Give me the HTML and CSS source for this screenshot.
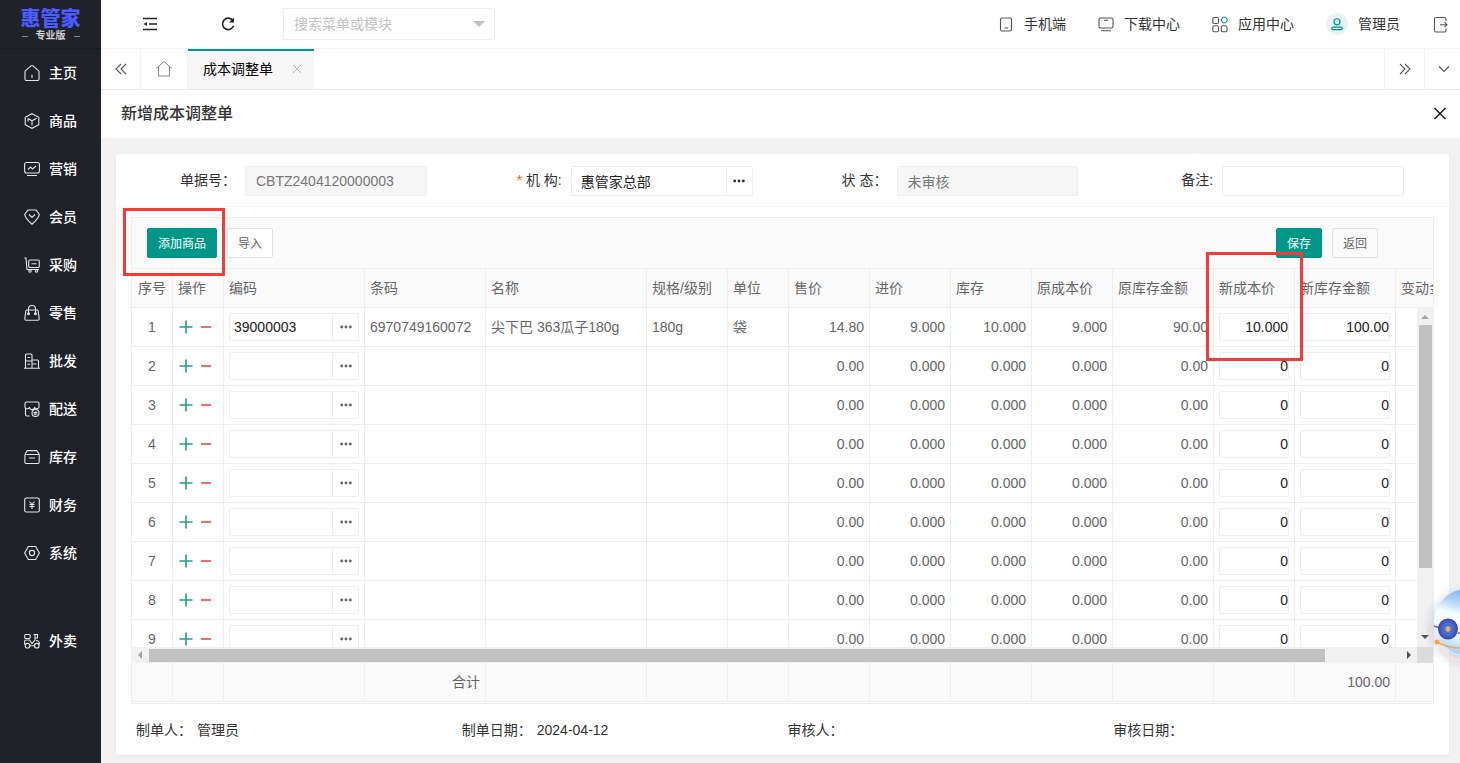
FILE: index.html
```html
<!DOCTYPE html>
<html lang="zh-CN">
<head>
<meta charset="utf-8">
<title>新增成本调整单</title>
<link rel="stylesheet" href="styles.css">
</head>
<body>
<div class="app">
  <aside class="sidebar">
    <div class="logo"><div class="logo-name">惠管家</div><div class="logo-sub"><i></i><span>专业版</span><i></i></div></div>
    <nav class="menu">
      <a class="menu-item" href="#"><svg class="icon" viewBox="0 0 16 16"><path d="M1 6.200 7 .9a1.500 1.500 0 0 1 2 0l6 5.300V14a1.500 1.500 0 0 1-1.500 1.500h-11A1.500 1.500 0 0 1 1 14zM8 9.500v3.500"/></svg>主页</a>
      <a class="menu-item" href="#"><svg class="icon" viewBox="0 0 16 16"><path d="M8 .7 14.800 4.300v7.400L8 15.300 1.200 11.700V4.300zM4 5.500l4 2.300 4.500-2.600M8 7.800V12.500M4 5.500v3"/></svg>商品</a>
      <a class="menu-item" href="#"><svg class="icon" viewBox="0 0 16 16"><rect x=".6" y="1.500" width="14.800" height="10.500" rx="2"/><path d="m4 8.500 2.500-2.500 2 2L12 5M3 14.500h10"/></svg>营销</a>
      <a class="menu-item" href="#"><svg class="icon" viewBox="0 0 16 16"><path d="M4 1h8l3.300 4.500c0 3-4.300 7-7.300 9.800C5 12.500.7 8.500.7 5.500zM5 5.500l3 3 3-3"/></svg>会员</a>
      <a class="menu-item" href="#"><svg class="icon" viewBox="0 0 16 16"><path d="M.3 1h1.700l1 11.500H15M6 3h8a1.300 1.300 0 0 1 1.300 1.300v4.900A1.300 1.300 0 0 1 14 10.500H6A1.300 1.300 0 0 1 4.700 9.200V4.300A1.300 1.300 0 0 1 6 3zM7.500 6.700h5"/><circle cx="6" cy="14" r="1.200"/><circle cx="12.500" cy="14" r="1.200"/></svg>采购</a>
      <a class="menu-item" href="#"><svg class="icon" viewBox="0 0 16 16"><path d="M3 5h10a1.200 1.200 0 0 1 1.200 1L15.200 14a1.200 1.200 0 0 1-1.200 1.200H2A1.200 1.200 0 0 1 .8 14L1.800 6A1.200 1.200 0 0 1 3 5zM4.500 8.500V4a3.500 3.500 0 0 1 7 0v4.500"/><circle cx="4.500" cy="8.700" r="1"/><circle cx="11.500" cy="8.700" r="1"/></svg>零售</a>
      <a class="menu-item" href="#"><svg class="icon" viewBox="0 0 16 16"><path d="M1.500 15V2a1 1 0 0 1 1-1H7a1 1 0 0 1 1 1v13M8 7h5.500a1 1 0 0 1 1 1v7M0 15.300h16M3.500 4.500h2.500M1.500 8H8M3.500 11.300H6M8 11h4.500"/></svg>批发</a>
      <a class="menu-item" href="#"><svg class="icon" viewBox="0 0 16 16"><path d="M1.500 7.500V13.500a1.500 1.500 0 0 0 1.500 1.500h2.500M2.500 1h11A1.500 1.500 0 0 1 15 2.500V5a2 2 0 0 1-4.300 1 2.500 2.500 0 0 1-5.200 0A2.300 2.300 0 0 1 1 5V2.500A1.500 1.500 0 0 1 2.500 1z"/><circle cx="11.500" cy="12" r="3.500"/><path d="M9.500 11.500h3l-1-1M13.500 13h-3l1 1"/></svg>配送</a>
      <a class="menu-item" href="#"><svg class="icon" viewBox="0 0 16 16"><path d="M1 5.500 2.500 2.500a1.500 1.500 0 0 1 1-.9h9a1.500 1.500 0 0 1 1 .9L15.200 5.500V13a1.500 1.500 0 0 1-1.500 1.500H2.500A1.500 1.500 0 0 1 .8 13zM1 5.500h14M5 9h6"/></svg>库存</a>
      <a class="menu-item" href="#"><svg class="icon" viewBox="0 0 16 16"><rect x=".7" y="1" width="14.600" height="14" rx="1.500"/><path d="m5.500 4.500 2.500 3 2.500-3M5.500 7.500h5M5.500 9.500h5M8 7.500V12"/></svg>财务</a>
      <a class="menu-item" href="#"><svg class="icon" viewBox="0 0 16 16"><path d="M4.300 1.500h7.400L15.400 8l-3.700 6.500H4.300L.6 8z"/><circle cx="8" cy="8" r="2.600"/></svg>系统</a>
      <a class="menu-item menu-item-apart" href="#"><svg class="icon" viewBox="0 0 16 16"><rect x=".7" y="1.500" width="5.500" height="4" rx="1"/><path d="M.6 11.500V8.500a1.500 1.500 0 0 1 1.500-1.500H5.500l2.500 3.500 3-3.500V1.500H9.500M11 1.500h2.500v3.500H11M12 7.500c2 0 3.500 1.500 3.500 4M6 12.700h4.500"/><circle cx="3.500" cy="12.700" r="2.300"/><circle cx="12.800" cy="12.700" r="2.300"/></svg>外卖</a>
    </nav>
  </aside>

  <div class="main">
    <header class="topbar">
      <button class="icon-btn top-fold" aria-label="收起菜单"><svg class="icon dark" viewBox="0 0 16 16"><path d="M1 2.500h14M7 8h8M1 13.500h14"/><path class="solid" d="M1.500 8 5 6v4z"/></svg></button>
      <button class="icon-btn" aria-label="刷新"><svg class="icon dark" viewBox="0 0 16 16"><path class="thick" d="M12.600 4.200A5.700 5.700 0 1 0 13.600 9.800"/><path class="solid" d="M14 1.500v5H9z"/></svg></button>
      <div class="search"><select aria-label="搜索菜单或模块"><option>搜索菜单或模块</option></select><span class="caret"></span></div>
      <nav class="top-links">
        <a href="#"><svg class="icon" viewBox="0 0 16 16"><rect x="2.500" y="2" width="11" height="13" rx="1.500"/><path d="M6.500 12h3.500"/></svg>手机端</a>
        <a href="#"><svg class="icon" viewBox="0 0 16 16"><rect x="1" y="2" width="14" height="10" rx="1.500"/><path d="M6 4.300h4M3 14.800h10"/></svg>下载中心</a>
        <a href="#"><svg class="icon" viewBox="0 0 16 16"><rect x=".8" y="1.500" width="5.700" height="6" rx="1.500"/><rect x=".8" y="9.800" width="5.700" height="6" rx="1.500"/><rect x="9.300" y="9.800" width="5.700" height="6" rx="1.500"/><path class="teal" d="M10.800 1.300h3L15.400 4l-1.600 2.800h-3L9.200 4z"/></svg>应用中心</a>
        <a href="#"><span class="avatar"><svg class="icon" viewBox="0 0 16 16"><circle class="teal" cx="8" cy="5.500" r="3.500"/><rect class="teal" x="2" y="11.500" width="12" height="3" rx="1.500"/></svg></span>管理员</a>
        <a href="#" aria-label="退出"><svg class="icon" viewBox="0 0 16 16"><path d="M14 5V3a1.500 1.500 0 0 0-1.500-1.500H4A1.500 1.500 0 0 0 2.500 3v11.500A1.500 1.500 0 0 0 4 16h8.500a1.500 1.500 0 0 0 1.500-1.500v-2M8 8.700h7M12.500 6.200l2.500 2.500-2.500 2.500"/></svg></a>
      </nav>
    </header>

    <div class="tabs">
      <button class="tab-cell" aria-label="向左"><svg class="icon" viewBox="0 0 16 16"><path d="M8 3 3 8l5 5M13 3 8 8l5 5"/></svg></button>
      <button class="tab-cell tab-home" aria-label="首页"><svg class="icon home" viewBox="0 0 18 18"><path d="M1 8.500 9 1.500l8 7M3.500 7v9h11V7"/></svg></button>
      <div class="tab-active"><span>成本调整单</span><button class="tab-close" aria-label="关闭标签"><svg viewBox="0 0 10 10"><path d="m1 1 8 8M9 1 1 9"/></svg></button></div>
      <button class="tab-cell tab-next" aria-label="向右"><svg class="icon" viewBox="0 0 16 16"><path d="m3 3 5 5-5 5M8 3l5 5-5 5"/></svg></button>
      <button class="tab-cell tab-more" aria-label="更多"><svg class="icon" viewBox="0 0 16 16"><path d="m3 5.500 5 5 5-5"/></svg></button>
    </div>

    <div class="titlebar"><h1>新增成本调整单</h1><button class="icon-btn" aria-label="关闭"><svg class="icon dark" viewBox="0 0 16 16"><path class="thick" d="m2.500 2 11 11M13.500 2l-11 11"/></svg></button></div>

    <div class="content">
      <section class="card">
        <form class="fields">
          <div class="field"><label for="no">单据号：</label><input id="no" class="disabled" value="CBTZ2404120000003" readonly></div>
          <div class="field"><label for="org"><em>*</em> 机 构:</label><div class="picker"><input id="org" value="惠管家总部"><button type="button" aria-label="选择机构"><svg class="dots" viewBox="0 0 14 4"><circle cx="2" cy="2" r="1.700"/><circle cx="7" cy="2" r="1.700"/><circle cx="12" cy="2" r="1.700"/></svg></button></div></div>
          <div class="field"><label for="state">状 态：</label><input id="state" class="disabled" value="未审核" readonly></div>
          <div class="field"><label for="memo">备注:</label><input id="memo"></div>
        </form>

        <div class="grid">
          <div class="toolbar">
            <button class="btn primary">添加商品</button>
            <button class="btn">导入</button>
            <button class="btn primary btn-save">保存</button>
            <button class="btn ghost">返回</button>
          </div>
          <div class="clip grid-head">
            <table>
              <colgroup class="cols"></colgroup>
              <thead><tr><th class="center">序号</th><th>操作</th><th>编码</th><th>条码</th><th>名称</th><th>规格/级别</th><th>单位</th><th>售价</th><th>进价</th><th>库存</th><th>原成本价</th><th>原库存金额</th><th>新成本价</th><th>新库存金额</th><th>变动金额</th></tr></thead>
            </table>
          </div>
          <div class="grid-body">
            <div class="clip"><table><colgroup class="cols"></colgroup><tbody id="rows"></tbody></table></div>
            <div class="bar bar-v"><span class="arrow up"></span><span class="thumb"></span><span class="arrow down"></span></div>
            <div class="bar bar-h"><span class="arrow left"></span><span class="track"><span class="thumb"></span></span><span class="arrow right"></span></div>
            <div class="corner"></div>
          </div>
          <div class="clip grid-foot">
            <table>
              <colgroup class="cols"></colgroup>
              <tbody><tr><td></td><td></td><td></td><td class="num">合计</td><td></td><td></td><td></td><td></td><td></td><td></td><td></td><td></td><td></td><td class="num">100.00</td><td></td></tr></tbody>
            </table>
          </div>
          <div class="mark mark-add"></div>
          <div class="mark mark-cost"></div>
        </div>

        <footer class="meta">
          <div><span>制单人：</span><span>管理员</span></div>
          <div><span>制单日期：</span><span>2024-04-12</span></div>
          <div><span>审核人：</span></div>
          <div><span>审核日期：</span></div>
        </footer>
      </section>
    </div>
  </div>

  <svg class="robot" viewBox="0 0 38 90">
    <defs>
      <linearGradient id="shell" x1=".6" y1="0" x2=".35" y2="1"><stop offset="0" stop-color="#6fa8ee"/><stop offset=".25" stop-color="#b5d6f8"/><stop offset=".42" stop-color="#f6fcff"/><stop offset=".7" stop-color="#f4fbff"/><stop offset="1" stop-color="#9ecbf5"/></linearGradient>
      <radialGradient id="eye"><stop offset="0" stop-color="#5b7fdc"/><stop offset=".6" stop-color="#4a66cc"/><stop offset="1" stop-color="#3345ad"/></radialGradient>
      <radialGradient id="halo"><stop offset=".75" stop-color="#8c9cd0" stop-opacity=".22"/><stop offset="1" stop-color="#8c9cd0" stop-opacity="0"/></radialGradient>
    </defs>
    <circle cx="43" cy="47" r="43" fill="url(#halo)"/>
    <path d="M18 64c-3 8 8 15 20 16" fill="none" stroke="#fbe3cf" stroke-width="2"/>
    <circle cx="45" cy="42" r="33" fill="url(#shell)"/>
    <path d="M12 46l6 2M36 53h2" fill="none" stroke="#5468b8" stroke-width="1.500"/>
    <ellipse cx="26" cy="49" rx="10" ry="10.500" fill="url(#eye)"/>
    <ellipse cx="26" cy="49" rx="2.400" ry="2.800" fill="#f8ab55"/>
    <path d="M10 44c-6 5-4 13 5 18" fill="none" stroke="#fcd3ac" stroke-width="1"/>
    <path d="M15 62c7 4 15 6 23 6" fill="none" stroke="#fba64c" stroke-width="1.500"/>
    <circle cx="15" cy="62" r="2.500" fill="#fba23c"/>
  </svg>
</div>
<script src="script.js"></script>
</body>
</html>
```
FILE: styles.css
```css
* { box-sizing: border-box; }
body { margin: 0; font: 14px/20px "Liberation Sans", "Noto Sans CJK SC", sans-serif; color: #333; }
button, input, select { font: inherit; color: inherit; margin: 0; padding: 0; }
button { background: none; border: 0; cursor: pointer; }
a { color: inherit; text-decoration: none; }
.app { display: flex; height: 100vh; min-height: 560px; overflow: hidden; position: relative; }

.icon { display: block; flex: none; width: 16px; height: 16px; fill: none; stroke: #555; stroke-width: 1.1; overflow: visible; }
.icon.dark { stroke: #222; stroke-width: 1.4; }
.icon .solid { fill: #222; stroke: none; }
.icon .thick { stroke-width: 1.6; }
.icon .teal { stroke: #009688; }
.icon-btn { width: 16px; height: 16px; flex: none; }

.sidebar { width: 101px; flex: none; background: #20222a; color: #fff; }
.logo { height: 49px; padding-top: 9px; border-bottom: 1px solid #1b1d24; text-align: center; }
.logo-name { color: #4a5cff; font-size: 20px; font-weight: 900; line-height: 20px; }
.logo-sub { display: flex; justify-content: center; align-items: center; gap: 8px; margin-top: 1px; font-size: 10px; line-height: 12px; font-weight: 700; color: #d0d0d2; }
.logo-sub i { width: 6px; height: 1px; background: #888; }
.menu-item { display: flex; align-items: center; gap: 9px; height: 48px; padding-left: 24px; font-weight: 500; }
.menu-item .icon { stroke: #e6e6e6; }
.menu-item-apart { margin-top: 40px; }

.main { flex: 1; min-width: 0; display: flex; flex-direction: column; background: #f1f1f1; }
.topbar { display: flex; align-items: center; height: 49px; flex: none; background: #fff; border-bottom: 1px solid #f4f4f4; padding: 0 12px 0 41px; }
.top-fold { margin-right: 62px; }
.search { position: relative; width: 212px; height: 32px; margin-left: 47px; }
.search select { width: 100%; height: 100%; appearance: none; border: 1px solid #eee; background: #fff; color: #c2c2c2; padding-left: 10px; }
.caret { position: absolute; right: 10px; top: 13px; border: 6px solid transparent; border-top-color: #c2c2c2; border-bottom: 0; }
.top-links { display: flex; align-items: center; gap: 32px; margin-left: auto; }
.top-links a { display: flex; align-items: center; gap: 10px; }
.avatar { width: 22px; height: 22px; border-radius: 50%; background: #e6f5f3; display: grid; place-items: center; }
.avatar .icon { width: 14px; height: 14px; stroke-width: 1.4; }

.tabs { display: flex; height: 41px; flex: none; background: #fff; border-bottom: 1px solid #e8e8e8; }
.tab-cell { width: 40px; flex: none; display: grid; place-items: center; border-right: 1px solid #f4f4f4; }
.tab-home { width: 47px; }
.tab-cell .home { width: 18px; height: 18px; stroke: #888; stroke-width: 1; }
.tab-active { display: flex; align-items: center; width: 126px; padding: 0 12px 2px 15px; justify-content: space-between; background: #f6f6f6; border-top: 2px solid #009688; color: #000; }
.tab-close { width: 10px; height: 10px; }
.tab-close svg { display: block; stroke: #bbb; fill: none; }
.tab-next { margin-left: auto; width: 41px; border-left: 1px solid #f4f4f4; }
.tab-more { width: 35px; padding-left: 3px; border: 0; }

.titlebar { display: flex; align-items: center; justify-content: space-between; height: 48px; flex: none; background: #fff; padding: 0 12px 0 20px; }
.titlebar h1 { margin: 0; font-size: 16px; font-weight: 500; line-height: 24px; }

.content { flex: 1; min-height: 0; padding: 16px 11px 8px 15px; }
.card { height: 100%; display: flex; flex-direction: column; background: #fff; border-radius: 2px; box-shadow: 0 1px 2px rgba(0, 0, 0, .06); }
.fields { display: grid; grid-template-columns: repeat(4, minmax(0, 1fr)); height: 53px; flex: none; padding: 12px 15px 0; border-bottom: 1px solid #f6f6f6; }
.field { display: flex; align-items: flex-start; padding-right: 30px; }
.field label { width: 105px; margin-right: 9px; flex: none; text-align: right; line-height: 28px; white-space: nowrap; }
.field em { color: #ff5722; font-style: normal; }
.field input, .picker { flex: 1; min-width: 0; height: 30px; border: 1px solid #eee; border-radius: 2px; background: #fff; padding: 0 10px; color: #222; }
.field .disabled { background: #f6f6f6; color: #777; }
.picker { display: flex; padding: 0; }
.field .picker input { height: 28px; border: 0; padding: 0 9px; }
.picker button { width: 26px; flex: none; border-left: 1px solid #eee; display: grid; place-items: center; }
.dots { display: block; width: 12px; height: 4px; fill: #333; }

.grid { position: relative; flex: 1; min-height: 0; margin: 10px 15px 0; border: 1px solid #eee; display: flex; flex-direction: column; padding-bottom: 1px; }
.toolbar { display: flex; align-items: center; gap: 10px; height: 51px; flex: none; padding: 0 55px 0 15px; background: #fafafa; border-bottom: 1px solid #eee; }
.btn { height: 30px; padding: 1px 10px 0; border: 1px solid #e2e2e2; border-radius: 2px; background: #fff; color: #666; font-size: 12px; line-height: 28px; white-space: nowrap; min-width: 46px; }
.primary { background: #009688; border-color: #009688; color: #fff; }
.ghost { background: #fafafa; }
.btn-save { margin-left: auto; }
.clip { overflow: hidden; min-width: 0; min-height: 0; }
table { border-collapse: separate; border-spacing: 0; table-layout: fixed; width: 1365px; color: #666; }
th, td { height: 39px; padding: 0 5px; border-right: 1px solid #eee; border-bottom: 1px solid #eee; text-align: left; font-weight: 400; white-space: nowrap; }
.center { text-align: center; }
.num { text-align: right; }
.grid-head, .grid-foot { flex: none; background: #fafafa; }
.w40 { width: 41px; } .w50 { width: 51px; } .w60 { width: 61px; } .w80 { width: 81px; }
.w100 { width: 101px; } .w120 { width: 121px; } .w140 { width: 141px; } .w160 { width: 161px; }

td .cell-input { display: block; width: 100%; height: 28px; border: 1px solid #eee; border-radius: 2px; padding: 0; text-align: right; color: #222; background: #fff; }
td .picker { height: 28px; border: 1px solid #eee; border-radius: 2px; }
td .picker input { flex: 1; min-width: 0; border: 0; padding: 0 4px; color: #222; background: none; }
td .dots { fill: #666; }
.ops { display: flex; align-items: center; gap: 6px; padding-left: 1px; }
.ops button { width: 14px; height: 14px; }
.ops svg { display: block; width: 14px; height: 14px; fill: none; stroke-width: 1.6; }
.ops .add { stroke: #279c8b; }
.ops .del { stroke: #f56c6c; stroke-width: 2; }

.grid-body { flex: 1; min-height: 0; display: grid; grid-template-columns: minmax(0, 1fr) 16px; grid-template-rows: minmax(0, 1fr) 16px; }
.bar { display: flex; align-items: center; justify-content: space-between; background: #f1f1f1; }
.bar-v { flex-direction: column; padding: 7px 0 8px; }
.bar-v .thumb { width: 13px; flex: 0 0 75%; margin: 6px 0 auto; }
.bar-h { padding: 0 6px; gap: 7px; }
.track { flex: 1; display: flex; }
.thumb { background: #c1c1c1; }
.track .thumb { width: 94%; height: 13px; }
.corner { background: #dcdcdc; }
.arrow { border: 4px solid transparent; flex: none; }
.up { border-top: 0; border-bottom-color: #a3a3a3; }
.down { border-bottom: 0; border-top-color: #505050; }
.left { border-left: 0; border-right-color: #a3a3a3; }
.right { border-right: 0; border-left-color: #505050; }

.mark { position: absolute; border: 3px solid #fb3838; pointer-events: none; }
.mark-add { left: -9px; top: -10px; width: 102px; height: 68px; }
.mark-cost { left: 1074px; top: 34px; width: 97px; height: 109px; }

.meta { display: grid; grid-template-columns: repeat(4, 1fr); align-items: center; height: 51px; flex: none; padding: 0 15px; }
.meta div { display: flex; gap: 5px; padding-left: 5px; }
.robot { position: absolute; right: 0; top: 580px; width: 38px; height: 90px; }
```
FILE: script.js
```js
const widths = [40, 50, 140, 120, 160, 80, 60, 80, 80, 80, 80, 100, 80, 100, 100];
document.querySelectorAll('.cols').forEach(group => {
  group.innerHTML = widths.map(w => `<col class="w${w}">`).join('');
});

const empty = { code: '', barcode: '', name: '', spec: '', unit: '', price: '0.00', buy: '0.000', stock: '0.000', cost: '0.000', amount: '0.00', newCost: '0', newAmount: '0' };
const items = [
  { code: '39000003', barcode: '6970749160072', name: '尖下巴 363瓜子180g', spec: '180g', unit: '袋', price: '14.80', buy: '9.000', stock: '10.000', cost: '9.000', amount: '90.00', newCost: '10.000', newAmount: '100.00' },
  ...Array(8).fill(empty)
];

document.getElementById('rows').innerHTML = items.map((r, i) => `
  <tr>
    <td class="center">${i + 1}</td>
    <td><div class="ops">
      <button aria-label="添加行"><svg class="add" viewBox="0 0 14 14"><path d="M.5 7h13M7 .5v13"/></svg></button>
      <button aria-label="删除行"><svg class="del" viewBox="0 0 14 14"><path d="M2 7h10"/></svg></button>
    </div></td>
    <td><div class="picker"><input aria-label="编码" value="${r.code}"><button aria-label="选择商品"><svg class="dots" viewBox="0 0 14 4"><circle cx="2" cy="2" r="1.700"/><circle cx="7" cy="2" r="1.700"/><circle cx="12" cy="2" r="1.700"/></svg></button></div></td>
    <td>${r.barcode}</td><td>${r.name}</td><td>${r.spec}</td><td>${r.unit}</td>
    <td class="num">${r.price}</td><td class="num">${r.buy}</td><td class="num">${r.stock}</td><td class="num">${r.cost}</td><td class="num">${r.amount}</td>
    <td><input class="cell-input" aria-label="新成本价" value="${r.newCost}"></td>
    <td><input class="cell-input" aria-label="新库存金额" value="${r.newAmount}"></td>
    <td></td>
  </tr>`).join('');
```
